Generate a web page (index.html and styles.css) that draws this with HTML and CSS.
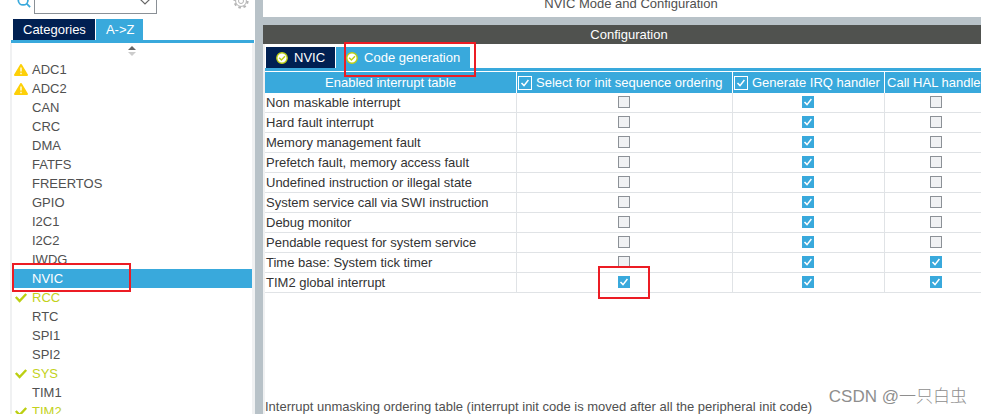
FILE: index.html
```html
<!DOCTYPE html>
<html lang="en">
<head>
  <meta charset="UTF-8">
  <meta name="viewport" content="width=device-width, initial-scale=1.0">
  <title>NVIC Mode and Configuration</title>
  <link rel="stylesheet" href="styles.css">
</head>
<body>
  <!-- Icons used more than once -->
  <svg class="sprite" aria-hidden="true">
    <symbol id="warning" viewBox="0 0 14 12">
      <path d="M7 1 L13 11 H1 Z" fill="#fdd008" stroke="#fdd008" stroke-width="2" stroke-linejoin="round"/>
      <path d="M7 3.5 V7.5 M7 8.8 V10.2" stroke="#fff" stroke-width="1.3"/>
    </symbol>
    <symbol id="tick" viewBox="0 0 14 12">
      <path d="M1.8 5 L5.6 9 L12.2 2" fill="none" stroke="#bccf12" stroke-width="2.4"/>
    </symbol>
    <symbol id="ok" viewBox="0 0 12 12">
      <circle cx="6" cy="6" r="5.2" fill="#fff" stroke="#bccf12" stroke-width="1.4"/>
      <path d="M3.2 5.8 L5.4 8 L9 4.2" fill="none" stroke="#bccf12" stroke-width="1.4"/>
    </symbol>
  </svg>

  <main class="app">
    <!-- Peripheral list -->
    <aside class="sidebar">
      <div class="search">
        <svg class="search-icon" viewBox="0 0 16 16">
          <circle cx="7" cy="7" r="5.5" fill="none" stroke="#39a9dc" stroke-width="2"/>
          <path d="M11 11 L15 15" stroke="#39a9dc" stroke-width="2"/>
        </svg>
        <select class="search-box" aria-label="Search">
          <option></option>
        </select>
        <button class="gear" aria-label="Settings">
          <svg viewBox="0 0 16 16">
            <circle cx="8" cy="8" r="6.6" fill="none" stroke="#b4b4b4" stroke-width="2" stroke-dasharray="2.6 2.58"/>
            <circle cx="8" cy="8" r="5.4" fill="none" stroke="#b4b4b4"/>
            <circle cx="8" cy="8" r="2.5" fill="none" stroke="#b4b4b4"/>
          </svg>
        </button>
      </div>

      <div class="tabs side-tabs">
        <button class="tab">Categories</button>
        <button class="tab active">A-&gt;Z</button>
      </div>

      <div class="list-box">
        <button class="sort" aria-label="Sort">
          <svg viewBox="0 0 8 12">
            <path d="M0 5 L4 1 L8 5 Z" fill="#666"/>
            <path d="M0 7 L4 11 L8 7 Z" fill="#ccc"/>
          </svg>
        </button>
        <ul class="list">
          <li><svg><use href="#warning"/></svg><a href="#">ADC1</a></li>
          <li><svg><use href="#warning"/></svg><a href="#">ADC2</a></li>
          <li><a href="#">CAN</a></li>
          <li><a href="#">CRC</a></li>
          <li><a href="#">DMA</a></li>
          <li><a href="#">FATFS</a></li>
          <li><a href="#">FREERTOS</a></li>
          <li><a href="#">GPIO</a></li>
          <li><a href="#">I2C1</a></li>
          <li><a href="#">I2C2</a></li>
          <li><a href="#">IWDG</a></li>
          <li class="selected"><a href="#">NVIC</a><span class="mark mark-item"></span></li>
          <li class="enabled"><svg><use href="#tick"/></svg><a href="#">RCC</a></li>
          <li><a href="#">RTC</a></li>
          <li><a href="#">SPI1</a></li>
          <li><a href="#">SPI2</a></li>
          <li class="enabled"><svg><use href="#tick"/></svg><a href="#">SYS</a></li>
          <li><a href="#">TIM1</a></li>
          <li class="enabled"><svg><use href="#tick"/></svg><a href="#">TIM2</a></li>
        </ul>
      </div>
    </aside>

    <!-- Configuration -->
    <section class="content">
      <div class="mode-title"><h1>NVIC Mode and Configuration</h1></div>
      <h2 class="config-title">Configuration</h2>

      <div class="config">
        <div class="tabs">
          <button class="tab"><svg><use href="#ok"/></svg>NVIC</button>
          <button class="tab active"><svg><use href="#ok"/></svg>Code generation<span class="mark mark-tab"></span></button>
        </div>

        <table class="interrupts">
          <colgroup>
            <col class="col-name">
            <col class="col-init">
            <col class="col-irq">
            <col class="col-hal">
          </colgroup>
          <thead>
            <tr>
              <th>Enabled interrupt table</th>
              <th><label><input type="checkbox" checked>Select for init sequence ordering</label></th>
              <th><label><input type="checkbox" checked>Generate IRQ handler</label></th>
              <th>Call HAL handler</th>
            </tr>
          </thead>
          <tbody>
            <tr>
              <td>Non maskable interrupt</td>
              <td><input type="checkbox" aria-label="Init sequence"></td>
              <td><input type="checkbox" aria-label="IRQ handler" checked></td>
              <td><input type="checkbox" aria-label="HAL handler"></td>
            </tr>
            <tr>
              <td>Hard fault interrupt</td>
              <td><input type="checkbox" aria-label="Init sequence"></td>
              <td><input type="checkbox" aria-label="IRQ handler" checked></td>
              <td><input type="checkbox" aria-label="HAL handler"></td>
            </tr>
            <tr>
              <td>Memory management fault</td>
              <td><input type="checkbox" aria-label="Init sequence"></td>
              <td><input type="checkbox" aria-label="IRQ handler" checked></td>
              <td><input type="checkbox" aria-label="HAL handler"></td>
            </tr>
            <tr>
              <td>Prefetch fault, memory access fault</td>
              <td><input type="checkbox" aria-label="Init sequence"></td>
              <td><input type="checkbox" aria-label="IRQ handler" checked></td>
              <td><input type="checkbox" aria-label="HAL handler"></td>
            </tr>
            <tr>
              <td>Undefined instruction or illegal state</td>
              <td><input type="checkbox" aria-label="Init sequence"></td>
              <td><input type="checkbox" aria-label="IRQ handler" checked></td>
              <td><input type="checkbox" aria-label="HAL handler"></td>
            </tr>
            <tr>
              <td>System service call via SWI instruction</td>
              <td><input type="checkbox" aria-label="Init sequence"></td>
              <td><input type="checkbox" aria-label="IRQ handler" checked></td>
              <td><input type="checkbox" aria-label="HAL handler"></td>
            </tr>
            <tr>
              <td>Debug monitor</td>
              <td><input type="checkbox" aria-label="Init sequence"></td>
              <td><input type="checkbox" aria-label="IRQ handler" checked></td>
              <td><input type="checkbox" aria-label="HAL handler"></td>
            </tr>
            <tr>
              <td>Pendable request for system service</td>
              <td><input type="checkbox" aria-label="Init sequence"></td>
              <td><input type="checkbox" aria-label="IRQ handler" checked></td>
              <td><input type="checkbox" aria-label="HAL handler"></td>
            </tr>
            <tr>
              <td>Time base: System tick timer</td>
              <td><input type="checkbox" aria-label="Init sequence"></td>
              <td><input type="checkbox" aria-label="IRQ handler" checked></td>
              <td><input type="checkbox" aria-label="HAL handler" checked></td>
            </tr>
            <tr>
              <td>TIM2 global interrupt</td>
              <td><input type="checkbox" aria-label="Init sequence" checked><span class="mark mark-check"></span></td>
              <td><input type="checkbox" aria-label="IRQ handler" checked></td>
              <td><input type="checkbox" aria-label="HAL handler" checked></td>
            </tr>
          </tbody>
        </table>

        <p class="note">Interrupt unmasking ordering table (interrupt init code is moved after all the peripheral init code)</p>
      </div>
    </section>
  </main>

  <div class="watermark">CSDN @一只白虫</div>
</body>
</html>
```

FILE: styles.css
```css
* {
  box-sizing: border-box;
}

body {
  margin: 0;
  overflow: hidden;
  background-color: #fff;
  color: #505050;
  font-family: "Liberation Sans", Arial, sans-serif;
  font-size: 13px;
}

button {
  padding: 0;
  border: none;
  background: none;
  font: inherit;
}

.sprite {
  display: none;
}

.app {
  display: flex;
  height: 100vh;
}

/* Sidebar */
.sidebar {
  display: flex;
  flex-direction: column;
  flex: none;
  width: 255px;
  padding-left: 10px;
}

.search {
  display: flex;
  align-items: flex-end;
  height: 14px;
  padding: 0 6px 0 7px;
}

.search-icon {
  flex: none;
  width: 14px;
  height: 14px;
  margin-bottom: 6px;
}

.search-box {
  flex: none;
  width: 123px;
  height: 24px;
  margin-left: 3px;
  border: 1px solid #8a9096;
  border-radius: 0;
  appearance: none;
  background: #fff url("data:image/svg+xml,%3Csvg xmlns='http://www.w3.org/2000/svg' viewBox='0 0 10 6'%3E%3Cpath d='M0.5 0.5 L5 5 L9.5 0.5' fill='none' stroke='%23666' stroke-width='1.2'/%3E%3C/svg%3E") no-repeat right 6px bottom 8px / 10px 6px;
}

.gear {
  width: 16px;
  height: 16px;
  margin: 0 0 5px auto;
}

.gear svg {
  display: block;
}

.tabs {
  display: flex;
  flex: none;
  gap: 1px;
  height: 24px;
  border-bottom: 3px solid #39a9dc;
}

.side-tabs {
  margin: 5px 1px 0;
  padding-left: 2px;
}

.tab {
  position: relative;
  display: flex;
  align-items: center;
  gap: 6px;
  padding: 0 10px;
  background-color: #002052;
  color: #fff;
}

.side-tabs .tab {
  padding: 0 9px 0 10px;
}

.tab.active {
  background-color: #39a9dc;
}

.tab svg {
  width: 12px;
  height: 12px;
}

.list-box {
  flex: 1;
  min-height: 0;
  overflow: hidden;
  border: solid #f0f1f2;
  border-width: 0 3px 0 2px;
}

.sort {
  display: block;
  width: 8px;
  height: 12px;
  margin: 2px auto 3px;
}

.sort svg {
  display: block;
}

.list {
  margin: 0;
  padding: 0 0 0 2px;
  list-style: none;
}

.list li {
  position: relative;
  display: grid;
  grid-template-columns: 18px 1fr;
  align-items: center;
  height: 19px;
}

.list svg {
  width: 14px;
  height: 12px;
}

.list a {
  grid-column: 2;
  color: inherit;
  text-decoration: none;
}

.list .selected {
  background-color: #39a9dc;
  color: #fff;
}

.list .enabled {
  color: #c3d21c;
}

/* Configuration panel */
.content {
  display: flex;
  flex-direction: column;
  flex: 1;
  min-width: 0;
  margin-right: -14px;
  border-left: 8px solid #b8c2c8;
}

.mode-title {
  display: flex;
  align-items: flex-end;
  justify-content: center;
  height: 25px;
  padding: 0 0 6px 4px;
  border-bottom: 8px solid #b8c2c8;
}

.mode-title h1,
.config-title {
  margin: 0;
  font-size: 13px;
  font-weight: normal;
}

.config-title {
  line-height: 19px;
  background-color: #50524f;
  color: #fff;
  text-align: center;
}

.config {
  display: flex;
  flex-direction: column;
  flex: 1;
  padding-top: 3px;
  border-left: 2px solid #f0f1f2;
}

.config .tabs {
  padding-left: 1px;
}

/* Interrupt table */
.interrupts {
  table-layout: fixed;
  width: 723px;
  margin-top: 1px;
  border-collapse: separate;
  border-spacing: 0;
}

.col-name { width: 252px; }
.col-init { width: 216px; }
.col-irq { width: 152px; }
.col-hal { width: 103px; }

.interrupts th {
  height: 21px;
  padding: 0 1px;
  border-right: 1px solid #fff;
  background-color: #39a9dc;
  color: #fff;
  font-weight: normal;
  white-space: nowrap;
}

.interrupts th label {
  display: flex;
  align-items: center;
  gap: 4px;
}

.interrupts td {
  position: relative;
  height: 20px;
  padding: 0 1px 1px 0;
  border: solid #e0e3e6;
  border-width: 0 1px 1px 0;
  color: #333;
  text-align: center;
}

.interrupts td:first-child {
  padding-left: 1px;
  text-align: left;
}

input[type="checkbox"] {
  display: block;
  flex: none;
  width: 12px;
  height: 12px;
  margin: 0 auto;
  border: 1px solid #8c9197;
  appearance: none;
  background-color: #f0f1f3;
}

input[type="checkbox"]:checked {
  border-color: #39a9dc;
  background: #39a9dc url("data:image/svg+xml,%3Csvg xmlns='http://www.w3.org/2000/svg' viewBox='0 0 10 10'%3E%3Cpath d='M1.5 5 L4 7.6 L8.4 2' fill='none' stroke='%23fff' stroke-width='1.5'/%3E%3C/svg%3E") no-repeat center / 10px 10px;
}

.interrupts th input[type="checkbox"] {
  width: 14px;
  height: 14px;
  margin: 0;
  border-color: #fff;
}

.note {
  margin: auto 0 0;
  line-height: 15px;
  white-space: nowrap;
}

/* Red highlight boxes */
.mark {
  position: absolute;
  z-index: 1;
  border: 2px solid #ec1c24;
  pointer-events: none;
}

.mark-item {
  top: -6px;
  left: -2px;
  width: 119px;
  height: 29px;
}

.mark-tab {
  top: -5px;
  left: 8px;
  right: -6px;
  height: 35px;
}

.mark-check {
  top: -7px;
  left: 81px;
  width: 52px;
  height: 33px;
}

.watermark {
  position: absolute;
  right: 14px;
  bottom: 7px;
  color: #8e8e8e;
  font-family: "Liberation Sans", "Noto Sans CJK SC", sans-serif;
  font-size: 17px;
  font-weight: 300;
}
```
